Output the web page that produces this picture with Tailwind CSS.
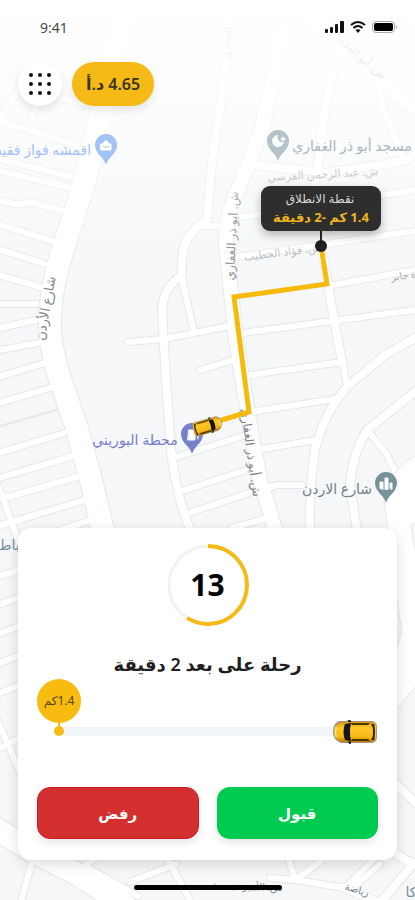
<!DOCTYPE html>
<html lang="ar" dir="rtl">
<head>
    <meta charset="UTF-8">
    <meta name="viewport" content="width=device-width, initial-scale=1.0">
    <title>طلب رحلة</title>
    <!-- Tailwind CSS CDN -->
    <script src="https://cdn.jsdelivr.net/npm/@tailwindcss/browser@4"></script>
</head>
<body class="relative flex min-h-screen flex-col overflow-x-hidden bg-[#f5f7f8] font-['Noto_Sans','DejaVu_Sans',sans-serif] text-[#1f1f1f]">

    <!-- Map -->
    <svg class="absolute inset-0 h-full w-full" viewBox="0 0 415 900" preserveAspectRatio="xMidYMin slice" direction="ltr" aria-label="الخريطة">
        <defs>
            <linearGradient id="fade" x1="0" y1="0" x2="0" y2="1">
                <stop offset="0" stop-color="#fff"/>
                <stop offset="0.25" stop-color="#fff" stop-opacity="0.8"/>
                <stop offset="1" stop-color="#fff" stop-opacity="0"/>
            </linearGradient>
            <linearGradient id="carBody" x1="0" y1="0" x2="0" y2="1">
                <stop offset="0" stop-color="#d99a08"/>
                <stop offset="0.3" stop-color="#ffc928"/>
                <stop offset="0.75" stop-color="#f8b914"/>
                <stop offset="1" stop-color="#b87a05"/>
            </linearGradient>
            <filter id="soft" x="-30%" y="-40%" width="160%" height="220%">
                <feDropShadow dx="0" dy="4" stdDeviation="5" flood-color="#000" flood-opacity="0.28"/>
            </filter>
            <symbol id="car" viewBox="0 0 46 24">
                <path d="M7 1H40Q45 2 45 7V17Q45 22 40 23H9Q1 20 1 12Q1 3 7 1Z" fill="#a8947a"/>
                <path d="M11 2H40Q44 3 44 7V17Q44 21 40 22H11Q2 20 2 12Q2 4 11 2Z" fill="url(#carBody)"/>
                <path d="M13 4Q10 12 13 20L19 21Q17 12 19 3Z" fill="#161616"/>
                <path d="M19 3H38L36 5H20ZM19 21H38L36 19H20Z" fill="#4a3708"/>
                <path d="M39 4L42 4Q44 12 42 20H39Q41 18 41 12T39 4Z" fill="#2b1f08"/>
                <path d="M16 1L17 -1L19 2ZM16 22L18 24L19 22Z" fill="#222" stroke="#222"/>
                <path d="M4 7Q3 12 4 17" fill="none" stroke="#fff0a8"/>
            </symbol>
            <path id="pin" d="M0 16C-2 8 -11 5 -11 -4A11 11 0 0 1 11 -4C11 5 2 8 0 16Z"/>

            <g id="alleys">
                <path d="M-5 127L20 88M20 88L110 110M2 122L92 150M-5 158L85 180M20 88L32 50M32 120L38 95"/>
                <path d="M-5 170L72 188M-5 200L15 204L35 203L63 211M-5 223L55 242M-5 248L45 264M-5 274L40 287M-5 304H36M-5 329L36 320M-5 351L38 343"/>
                <path d="M-5 378L45 363M-5 404L50 388M-5 454L65 433M-5 479L73 456M5 498L77 477M-5 527L85 500M60 530L95 519"/>
                <path d="M-8 472L2 496L20 545M-5 577L20 570M-5 606L20 597M-5 635L20 626M-5 665L20 655M-5 695L20 685"/>
                <path d="M181 275L194 332M128 342L163 339L235 325M200 370L240 358M173 458L246 435M182 491L252 468M189 513L258 490M232 528L264 519"/>
                <path d="M242 217L415 190M205 226H226M238 257L415 231M328 286L415 270M242 333L415 310M250 375L342 362M250 412L335 399M256 450L316 440M262 489L278 485H302"/>
                <path d="M379 82L382 105L404 158M367 430L386 453L396 474M342 358L347 386"/>
                <path d="M-5 715L26 785M0 748L20 738M75 874L95 858M130 882L176 864M167 858L190 900M32 862L20 905M88 868L138 896"/>
                <path d="M287 856L296 880L322 860M270 878L296 880L345 888L375 858M380 864L350 890"/>
            </g>
            <g id="streets">
                <path d="M228 10L224 80L212 160L207 220Q182 235 182 262V275Q163 288 162 310L166 380L171 450Q175 490 190 530"/>
                <path d="M336 55L325 110L317 172L310 215M321 245L328 285L335 325L342 362"/>
                <path d="M420 335L385 355L348 386Q325 410 315 450Q309 490 310 530M420 388L367 430Q352 455 350 485L357 530"/>
                <path d="M255 165L325 173L405 161L420 150M345 888L380 903L413 864L390 850M413 864L425 858M390 778L425 812"/>
            </g>
            <g id="avenues">
                <path d="M282 30L272 85L262 128L242 180Q225 215 226 245L236 340L249 420L260 480L277 535"/>
                <path d="M295 0L335 40L380 80L420 112"/>
            </g>
            <g id="highways">
                <path d="M122 20L102 110L85 180L66 240Q49 290 50 325Q50 350 62 385L76 425L91 480L104 535"/>
                <path d="M-5 828L30 850L75 873L125 905"/>
            </g>
        </defs>

        <rect width="415" height="900" fill="#f5f7f8"/>
        <!-- road edges -->
        <g fill="none" stroke="#e5e8e9" stroke-linecap="round" stroke-linejoin="round">
            <use href="#alleys" stroke-width="8"/>
            <use href="#streets" stroke-width="10"/>
            <use href="#avenues" stroke-width="16"/>
            <use href="#highways" stroke-width="24"/>
            <path d="M0 426L57 410" stroke-width="2"/>
        </g>
        <!-- road surface -->
        <g fill="none" stroke="#fff" stroke-linecap="round" stroke-linejoin="round">
            <use href="#alleys" stroke-width="6"/>
            <use href="#streets" stroke-width="8"/>
            <use href="#avenues" stroke-width="14"/>
            <use href="#highways" stroke-width="22"/>
        </g>
        <!-- interchange -->
        <path d="M425 450Q388 468 384 500L388 530L398 608L402 632L396 650V710L425 675V570Q414 560 411 525L425 520Z" fill="#fff" stroke="#e5e8e9"/>

        <!-- street names -->
        <g text-anchor="middle" class="fill-[#7d8388] text-[12px]">
            <text transform="translate(50 309) rotate(-80)" class="text-[13px]">شارع الأردن</text>
            <text transform="translate(236 236) rotate(-87)">ش. ابو ذر الغفاري</text>
            <text transform="translate(247 453) rotate(82)">ش. أبو ذر الغفاري</text>
            <text transform="translate(283 256) rotate(-7)" class="fill-[#b2b6b9] text-[11px]">ش. فؤاد الخطيب</text>
            <text transform="translate(404 279) rotate(-8)" class="fill-[#a2a7aa] text-[10px]">ة جابر</text>
            <text transform="translate(323 178) rotate(-3)" class="fill-[#9da2a5] text-[11px]">ش. عبد الرحمن الفرسي</text>
            <text transform="translate(360 61) rotate(40)" class="fill-[#7d8388] text-[11px]">ش. أبو العلاء</text>
            <text transform="translate(230 43) rotate(-87)" class="fill-[#8d9396] text-[10px]">الغفاري</text>
            <text transform="translate(247 890) rotate(2)" class="text-[10px]">ش. الأميرة بسمة</text>
            <text transform="translate(356 893) rotate(16)" class="text-[10px]">رياضة</text>
        </g>

        <rect width="415" height="300" fill="url(#fade)"/>

        <!-- places -->
        <g text-anchor="middle" class="text-[14px]">
            <text x="43" y="155" class="fill-[#a3c2f5]">اقمشه فواز فقيه</text>
            <text x="352" y="151" class="fill-[#a9b8bd]">مسجد أبو ذر الغفاري</text>
            <text x="135" y="445" class="fill-[#7480cc]">محطة البوريني</text>
            <text x="337" y="494" class="fill-[#6d848d]">شارع الاردن</text>
            <text x="9" y="550" class="fill-[#78909c]">باط</text>
            <text x="411" y="897" class="fill-[#78909c]">كا</text>
        </g>
        <g fill="none" stroke-linecap="round">
            <use href="#pin" x="106" y="149" fill="#a3c2f5"/>
            <path d="M101 144H111V150H101ZM103 144Q106 137 109 144" fill="#fff" stroke="#fff"/>
            <path d="M103 146Q106 149 109 146" stroke="#a3c2f5"/>
            <use href="#pin" x="278" y="145" fill="#b4c3c7"/>
            <path d="M278 135A6 6 0 1 0 284 142A5 5 0 0 1 278 135Z" fill="#fff"/>
            <path d="M280 139L282 138L283 136L284 138L286 139L284 140L283 142L282 140Z" fill="#fff"/>
            <use href="#pin" x="192" y="438" fill="#7480cc"/>
            <path d="M189 430H195V440H188ZM196 433L198 435V439" fill="#fff" stroke="#fff"/>
            <use href="#pin" x="386" y="487" fill="#78929b"/>
            <path d="M380 488V482H383V489ZM385 489V478H388V489ZM390 488V483H392V489Z" fill="#fff" stroke="#fff"/>
        </g>

        <!-- route -->
        <path d="M321 246L327 284L234 297L249 412L215 422" fill="none" stroke="#f6ba0b" stroke-width="5"/>
        <use href="#car" x="-15" y="-8" width="31" height="16" transform="translate(208 426) rotate(-16) scale(-1 1)"/>
        <path d="M321 230V246" stroke="#2b2b2b" stroke-width="2"/>
        <circle cx="321" cy="246" r="6" fill="#202020"/>
        <rect x="261" y="186" width="120" height="45" rx="9" fill="#2d2d2d" filter="url(#soft)"/>
        <g text-anchor="middle" direction="rtl">
            <text x="320" y="203" class="fill-[#d6d6d6] text-[12px]">نقطة الانطلاق</text>
            <text x="321" y="222" class="fill-[#eeb41c] text-[13px] font-bold">1.4 كم -2 دقيقة</text>
        </g>
    </svg>

    <!-- Status bar -->
    <header class="relative flex items-center justify-between pt-4 pr-4 pl-10" dir="ltr">
        <span class="text-[14px] leading-6 text-[#4a4a4a]">9:41</span>
        <svg class="h-4 w-[74px]" viewBox="0 0 74 16" aria-hidden="true">
            <g fill="#111">
                <rect x="0" y="9" width="3" height="4" rx="1"/>
                <rect x="5" y="7" width="3" height="6" rx="1"/>
                <rect x="10" y="4" width="3" height="9" rx="1"/>
                <rect x="15" y="1" width="4" height="12" rx="1"/>
            </g>
            <g fill="none" stroke="#111" stroke-width="2">
                <path d="M26 5Q33 -1 40 5M28.500 8Q33 4 37.500 8"/>
            </g>
            <path d="M30.500 10Q33 8.500 35.500 10L33 13Z" fill="#111"/>
            <rect x="47.500" y="1.500" width="22" height="11" rx="3.500" fill="none" stroke="#aaa"/>
            <rect x="49" y="3" width="19" height="8" rx="2" fill="#000"/>
            <path d="M71 5V9Q73 7 71 5Z" fill="#999"/>
        </svg>
    </header>

    <!-- Menu and fare -->
    <div class="relative mt-[22px] flex items-center gap-[10px] px-[18px]" dir="ltr">
        <button type="button" aria-label="القائمة" class="flex size-11 items-center justify-center rounded-full bg-white shadow-[0_4px_8px_rgba(0,0,0,0.10)]">
            <svg class="size-[22px]" viewBox="0 0 22 22" fill="#111">
                <circle cx="2" cy="2" r="2"/><circle cx="11" cy="2" r="2"/><circle cx="20" cy="2" r="2"/>
                <circle cx="2" cy="11" r="2"/><circle cx="11" cy="11" r="2"/><circle cx="20" cy="11" r="2"/>
                <circle cx="2" cy="20" r="2"/><circle cx="11" cy="20" r="2"/><circle cx="20" cy="20" r="2"/>
            </svg>
        </button>
        <div dir="rtl" class="flex h-11 items-center rounded-full bg-[#f6ba16] px-[14px] text-[16px] font-semibold whitespace-nowrap text-[#3a3320] shadow-[0_4px_8px_rgba(0,0,0,0.10)]"><bdi dir="ltr">4.65</bdi>&nbsp;د.أ</div>
    </div>

    <!-- Trip request card -->
    <main class="relative mx-[18px] mt-auto rounded-[14px] bg-white px-[19px] pt-4 pb-[21px] shadow-[0_4px_14px_rgba(0,0,0,0.14)]">
        <div class="relative mx-auto flex size-[82px] items-center justify-center">
            <svg class="absolute inset-0 h-full w-full -rotate-90" viewBox="0 0 82 82" fill="none" aria-hidden="true">
                <circle cx="41" cy="41" r="39" stroke="#f0f3f4" stroke-width="3"/>
                <circle cx="41" cy="41" r="39" stroke="#f6ba16" stroke-width="4" pathLength="100" stroke-dasharray="59 100"/>
            </svg>
            <span class="text-[30px] leading-8 font-bold text-black">13</span>
        </div>

        <h1 class="mt-6 text-center text-[18px] leading-7 font-semibold">رحلة على بعد 2 دقيقة</h1>

        <!-- Distance left -->
        <div class="relative h-[62px]">
            <div class="absolute right-10 bottom-1 left-[22px] h-[9px] rounded-full bg-[#f2f5f7]"></div>
            <div class="absolute bottom-1 left-0 flex flex-col items-center">
                <span class="flex size-11 items-center justify-center rounded-full bg-[#f8bb10] text-[12px] whitespace-nowrap text-[#554415]">1.4كم</span>
                <span class="h-[3px] w-[2px] bg-[#f8bb10]"></span>
                <span class="size-[10px] rounded-full bg-[#f8bb10]"></span>
            </div>
            <svg class="absolute right-0 -bottom-1 h-6 w-[46px]" viewBox="0 0 46 24" aria-hidden="true"><use href="#car"/></svg>
        </div>

        <div class="mt-[47px] grid grid-cols-2 gap-[18px]">
            <button type="button" class="h-[52px] rounded-[13px] bg-[#00cb50] text-[15px] font-bold text-white shadow-[0_4px_8px_rgba(0,0,0,0.10)]">قبول</button>
            <button type="button" class="h-[52px] rounded-[13px] border border-[#c91c20] bg-[#d32f2f] text-[15px] font-bold text-white shadow-[0_4px_8px_rgba(0,0,0,0.10)]">رفض</button>
        </div>
    </main>

    <!-- Home indicator -->
    <div class="relative mx-auto mt-[25px] mb-[10px] h-[5px] w-[148px] rounded-full bg-black"></div>
</body>
</html>
